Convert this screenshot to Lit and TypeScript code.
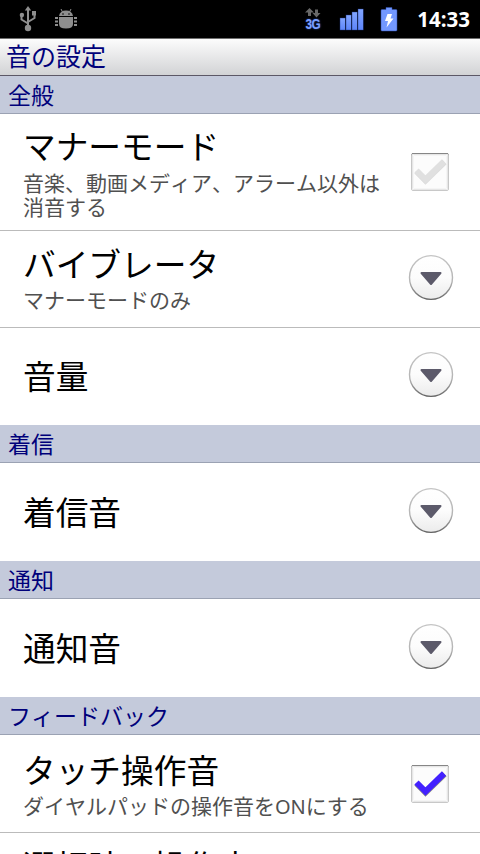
import { LitElement, html, css, svg, nothing } from 'lit'
import { customElement, property } from 'lit/decorators.js'

type Widget = 'arrow' | 'checked' | 'disabled'

interface Preference {
  title: string
  summary?: string
  widget: Widget
  size?: 'tall' | 'clipped'
}

interface Category {
  name: string
  items: Preference[]
}

const categories: Category[] = [
  {
    name: '全般',
    items: [
      {
        title: 'マナーモード',
        summary: '音楽、動画メディア、アラーム以外は\n消音する',
        widget: 'disabled',
        size: 'tall',
      },
      { title: 'バイブレータ', summary: 'マナーモードのみ', widget: 'arrow' },
      { title: '音量', widget: 'arrow' },
    ],
  },
  { name: '着信', items: [{ title: '着信音', widget: 'arrow' }] },
  { name: '通知', items: [{ title: '通知音', widget: 'arrow' }] },
  {
    name: 'フィードバック',
    items: [
      { title: 'タッチ操作音', summary: 'ダイヤルパッドの操作音をONにする', widget: 'checked' },
      { title: '選択時の操作音', widget: 'checked', size: 'clipped' },
    ],
  },
]

@customElement('status-bar')
export class StatusBar extends LitElement {
  static styles = [
    css`
      :host {
        display: flex;
        align-items: center;
        height: 38px;
        box-sizing: border-box;
        padding: 0 10px 0 19px;
        background: #000;
        color: #fff;
      }

      svg {
        display: block;
      }

      .bug {
        margin-left: 18px;
      }

      .network {
        display: flex;
        flex-direction: column;
        align-items: center;
        width: 18px;
        margin-left: auto;
      }

      .network__label {
        font: bold 14px/13px 'Liberation Sans', sans-serif;
        letter-spacing: -0.5px;
        color: #7b9fff;
        text-shadow: 0 0 2px #2f55c0;
        transform: scaleX(0.84);
      }

      .signal {
        margin-left: 17px;
      }

      .battery {
        margin-left: 15px;
      }

      .clock {
        width: 54px;
        margin-left: 18px;
        text-align: right;
        white-space: nowrap;
        font: bold 20.5px/38px 'Open Sans', 'Noto Sans', sans-serif;
      }
    `,
  ]

  @property() time: string = '14:33'

  render() {
    return html`
      <svg width="18" height="26" viewBox="0 0 18 26">
        <g fill="none" stroke="#8e8e8e" stroke-width="2">
          <path d="M9 4V22M2.5 9V13.5L9 17.500M15.5 8V12L9 16" />
        </g>
        <g fill="#8e8e8e">
          <path d="M9 0L12.2 4.500H5.8Z" />
          <circle cx="2.9" cy="9" r="2.2" />
          <rect x="13" y="5" width="4" height="4.5" />
          <circle cx="9" cy="22" r="3.200" />
        </g>
      </svg>
      <svg class="bug" width="22" height="22" viewBox="0 0 22 22">
        <g fill="#8e8e8e">
          <path d="M4 8Q5 2.500 11 2.500T18 8Z" />
          <path d="M4 9H18V16Q18 20.500 11 20.500T4 16Z" />
          <path d="M0 9H3V11H0ZM0 12.500H3V14.500H0ZM0 16H3V18H0Z" />
          <path d="M19 9H22V11H19ZM19 12.500H22V14.500H19ZM19 16H22V18H19Z" />
        </g>
        <path d="M7.500 4L6 1M14.500 4L16 1" fill="none" stroke="#8e8e8e" />
        <circle cx="8" cy="6" r=".8" />
        <circle cx="14" cy="6" r=".8" />
      </svg>
      <div class="network">
        <svg width="16" height="10" viewBox="0 0 16 10" fill="#686868">
          <path d="M4.500 0L9 4.500H6V8H3V4.500H0Z" />
          <path d="M11.500 9.500L7.500 5H10V1.500H13V5H15.500Z" />
        </svg>
        <span class="network__label">3G</span>
      </div>
      <svg class="signal" width="26" height="24" viewBox="0 0 26 24">
        <defs>
          <linearGradient id="blue" x1="0" y1="0" x2="0" y2="1">
            <stop offset="0" stop-color="#82a5ff" />
            <stop offset="1" stop-color="#5d85fa" />
          </linearGradient>
        </defs>
        <g fill="url(#blue)" stroke="#1c3582" stroke-width=".4">
          <rect x="1" y="11" width="5.200" height="12" />
          <rect x="7" y="8" width="5.200" height="15" />
          <rect x="13" y="5" width="5.200" height="18" />
          <rect x="19" y="2" width="5.200" height="21" />
        </g>
      </svg>
      <svg class="battery" width="18" height="25" viewBox="0 0 18 25">
        <path
          d="M6 .5H12V2.500H16Q17 2.500 17 3.500V23Q17 24 16 24H2Q1 24 1 23V3.500Q1 2.500 2 2.500H6Z"
          fill="#7398ff"
          stroke="#2e4fae"
          stroke-width=".5"
        />
        <path d="M7.500 7H12L10.500 11.500H13.500L6.500 20.500L8 14H5Z" fill="#fff" />
      </svg>
      <div class="clock">${this.time}</div>
    `
  }
}

@customElement('preference-widget')
export class PreferenceWidget extends LitElement {
  static styles = [
    css`
      :host {
        display: block;
        width: 46px;
        height: 46px;
      }

      svg {
        display: block;
        overflow: visible;
      }
    `,
  ]

  @property() kind: Widget = 'arrow'

  renderArrow() {
    return svg`
      <defs>
        <linearGradient id="face" x1="0" y1="0" x2="0" y2="1">
          <stop offset="0" stop-color="#fff" />
          <stop offset=".5" stop-color="#fcfcfc" />
          <stop offset="1" stop-color="#ebebeb" />
        </linearGradient>
        <linearGradient id="rim" x1="0" y1="0" x2="0" y2="1">
          <stop offset="0" stop-color="#c4c4c4" />
          <stop offset=".6" stop-color="#b4b4b4" />
          <stop offset="1" stop-color="#666" />
        </linearGradient>
      </defs>
      <ellipse cx="23" cy="22.500" rx="21.500" ry="21.900" fill="url(#face)" stroke="url(#rim)" stroke-width="1.400" />
      <path
        d="M13.500 18H32.500L23 29Z"
        fill="#5c5a6a"
        stroke="#5c5a6a"
        stroke-width="2"
        stroke-linejoin="round"
      />
    `
  }

  renderCheck() {
    const on = this.kind === 'checked'
    return svg`
      <defs>
        <linearGradient id="edge" x1="0" y1="0" x2="0" y2="1">
          <stop offset="0" stop-color="#8a8a8a" />
          <stop offset=".06" stop-color="#c6c6c6" />
          <stop offset="1" stop-color="#c8c8c8" />
        </linearGradient>
      </defs>
      <rect x="3.500" y="4.500" width="37" height="37" rx="1.500" fill="#fcfcfc" stroke="url(#edge)" />
      <rect x="4.500" y="5.500" width="35" height="35" rx="1" fill="none" stroke="#e6e6e6" />
      <rect x="5.500" y="6.500" width="33" height="33" rx="1" fill="none" stroke="#f5f5f5" />
      <path d="M4 4.500H40" stroke="#868686" />
      <path
        d="M8.500 22.500L17.500 31.500L36.500 13"
        fill="none"
        stroke=${on ? '#555' : '#cfcfcf'}
        stroke-opacity=".7"
        stroke-width="6"
      />
      <path
        d="M8.500 21.500L17.500 30.500L36 12.500"
        fill="none"
        stroke=${on ? '#4321ff' : '#e0e0e0'}
        stroke-width="6"
      />
    `
  }

  render() {
    return html`
      <svg width="46" height="46" viewBox="0 0 46 46">
        ${this.kind === 'arrow' ? this.renderArrow() : this.renderCheck()}
      </svg>
    `
  }
}

@customElement('app-root')
export class SoundSettings extends LitElement {
  static styles = [
    css`
      :host {
        display: block;
        height: 854px;
        overflow: hidden;
        background: #fff;
        font-family: 'Noto Sans CJK JP', sans-serif;
        font-weight: 400;
        font-kerning: none;
        text-spacing-trim: space-all;
      }

      .title {
        height: 38px;
        box-sizing: border-box;
        padding-left: 6px;
        border-top: 1px solid #6f6f6f;
        border-bottom: 1px solid #5c5866;
        background: linear-gradient(#fcfcfc, #d2d3d5);
        color: #00007a;
        font-size: 25px;
        line-height: 33px;
      }

      .category {
        height: 38px;
        box-sizing: border-box;
        padding-left: 8px;
        border-bottom: 1px solid #9ba2b3;
        background: #c4cadb;
        color: #00007a;
        font-size: 23px;
        line-height: 37px;
      }

      .row {
        display: flex;
        align-items: center;
        height: 97px;
        box-sizing: border-box;
        padding: 0 26px 0 23px;
      }

      .row + .row {
        border-top: 1px solid #bbb;
        height: 98px;
      }

      .row.last {
        height: 98px;
      }

      .row.tall {
        height: 116px;
      }

      .row + .row.middle {
        height: 97px;
      }

      .text {
        flex: 1;
        white-space: nowrap;
        padding-bottom: 3px;
      }

      .clipped .text {
        align-self: flex-start;
        padding-top: 11px;
      }

      .name {
        color: #000;
        font-size: 32.7px;
        line-height: 41px;
      }

      .summary {
        color: #505050;
        font-size: 21px;
        line-height: 24px;
        padding-top: 4px;
        white-space: pre;
      }

      .tall .summary {
        padding-top: 5px;
      }

      .middle .text {
        padding-bottom: 6px;
      }

      .first:not(.tall) .text {
        padding-bottom: 1px;
      }

      .last .text {
        padding-bottom: 4px;
      }

      .arrow {
        margin-bottom: 3px;
      }

      .latin {
        font-family: 'Noto Sans', sans-serif;
        font-size: 20px;
      }
    `,
  ]

  renderSummary(text: string) {
    const parts = text.split(/([A-Za-z]+)/)
    return html`<div class="summary">${parts.map((part, i) =>
      i % 2 ? html`<span class="latin">${part}</span>` : part
    )}</div>`
  }

  renderRow(item: Preference, index: number, items: Preference[]) {
    const place = index === items.length - 1 ? 'last' : index > 0 ? 'middle' : 'first'
    return html`
      <div class="row ${place} ${item.size ?? ''}">
        <div class="text">
          <div class="name">${item.title}</div>
          ${item.summary ? this.renderSummary(item.summary) : nothing}
        </div>
        <preference-widget class=${item.widget} .kind=${item.widget}></preference-widget>
      </div>
    `
  }

  render() {
    return html`
      <status-bar></status-bar>
      <div class="title">音の設定</div>
      ${categories.map(
        category => html`
          <div class="category">${category.name}</div>
          ${category.items.map((item, i, all) => this.renderRow(item, i, all))}
        `
      )}
    `
  }
}
